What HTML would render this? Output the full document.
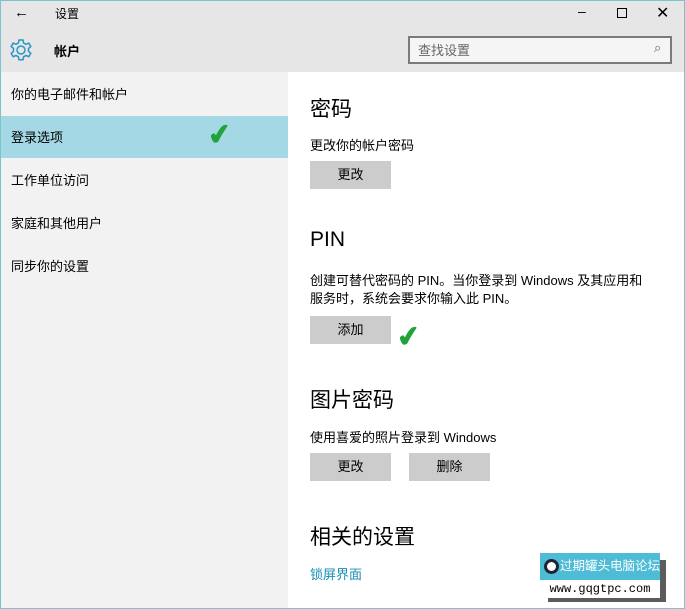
<!DOCTYPE html>
<html><head><meta charset="utf-8"><style>
*{margin:0;padding:0;box-sizing:border-box}
body{width:685px;height:609px;overflow:hidden;font-family:"Liberation Sans","Noto Sans CJK SC",sans-serif;background:#fff;position:relative;color:#000}
.frame{position:absolute;left:0;top:0;width:685px;height:609px;border:1px solid #7cc3cf}
.title{position:absolute;left:1px;top:1px;width:683px;height:71px;background:#e6e6e6}
.side{position:absolute;left:1px;top:72px;width:287px;height:536px;background:#f2f2f2}
.a{position:absolute;white-space:nowrap}
.item{position:absolute;left:11px;font-size:13px}
.sel{position:absolute;left:1px;top:116px;width:287px;height:42px;background:#a4d8e4}
.btn{position:absolute;width:81px;height:28px;background:#ccc;font-size:13px;text-align:center;line-height:28px}
h2{position:absolute;font-weight:normal;font-size:21px;left:310px}
.t{position:absolute;left:310px;font-size:13px}
</style></head><body>
<div class="title"></div>
<div class="side"></div>
<div class="sel"></div>
<div class="a" style="left:14px;top:4px;font-size:15px">←</div>
<div class="a" style="left:55px;top:5px;font-size:12px">设置</div>
<div class="a" style="left:578px;top:3px;font-size:14px">–</div>
<div class="a" style="left:617px;top:8px;width:10px;height:10px;border:1px solid #000"></div>
<div class="a" style="left:656px;top:3px;font-size:16px">✕</div>
<svg class="a" style="left:9px;top:38px" width="24" height="24" viewBox="0 0 24 24"><g fill="none" stroke="#2a95c4" stroke-width="1.5"><circle cx="12" cy="12" r="4"/><path d="M10 2h4l.6 3 2.4 1.3 2.8-1.2 2 3.4-2.3 2v2.8l2.3 2-2 3.4-2.8-1.2-2.4 1.3-.6 3h-4l-.6-3-2.4-1.3-2.8 1.2-2-3.4 2.3-2v-2.8l-2.3-2 2-3.4 2.8 1.2 2.4-1.3z"/></g></svg>
<div class="a" style="left:54px;top:41px;font-size:13px;font-weight:bold">帐户</div>
<div class="a" style="left:408px;top:36px;width:264px;height:28px;border:2px solid #7a7a7a;background:#f5f5f5"></div>
<div class="a" style="left:418px;top:40px;font-size:13px;color:#666">查找设置</div>
<div class="a" style="left:654px;top:40px;font-size:13px;color:#666">⌕</div>
<div class="item" style="top:84px">你的电子邮件和帐户</div>
<div class="item" style="top:127px">登录选项</div>
<div class="item" style="top:170px">工作单位访问</div>
<div class="item" style="top:213px">家庭和其他用户</div>
<div class="item" style="top:256px">同步你的设置</div>
<div class="a" style="left:208px;top:118px;font-size:28px;color:#22a33a;font-weight:bold;transform:rotate(-8deg)">✔</div>
<h2 style="top:93px">密码</h2>
<div class="t" style="top:135px">更改你的帐户密码</div>
<div class="btn" style="left:310px;top:161px">更改</div>
<h2 style="top:228px">PIN</h2>
<div class="t" style="top:272px;line-height:18px">创建可替代密码的 PIN。当你登录到 Windows 及其应用和<br>服务时，系统会要求你输入此 PIN。</div>
<div class="btn" style="left:310px;top:316px">添加</div>
<div class="a" style="left:397px;top:320px;font-size:28px;color:#22a33a;font-weight:bold;transform:rotate(-8deg)">✔</div>
<h2 style="top:384px">图片密码</h2>
<div class="t" style="top:427px">使用喜爱的照片登录到 Windows</div>
<div class="btn" style="left:310px;top:453px">更改</div>
<div class="btn" style="left:409px;top:453px">删除</div>
<h2 style="top:521px">相关的设置</h2>
<div class="t" style="top:564px;color:#1a8fb5">锁屏界面</div>
<div class="a" style="left:548px;top:560px;width:118px;height:42px;background:#333;opacity:.8"></div>
<div class="a" style="left:540px;top:553px;width:120px;height:27px;background:#4fbcd7;color:#fff;font-size:12.5px;line-height:27px;padding-left:20px;overflow:hidden">过期罐头电脑论坛</div>
<div class="a" style="left:544px;top:559px;width:15px;height:15px;border-radius:50%;border:3px solid #223;background:#fff"></div>
<div class="a" style="left:540px;top:580px;width:120px;height:18px;background:#fff;font-family:'Liberation Mono',monospace;font-size:12px;text-align:center;line-height:18px">www.gqgtpc.com</div>
<div class="frame"></div>
</body></html>
